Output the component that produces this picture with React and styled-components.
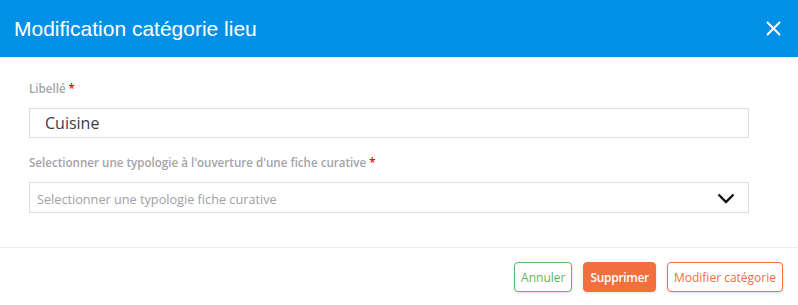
import React from "react";
import styled, { createGlobalStyle } from "styled-components";

const GlobalStyle = createGlobalStyle`
  html, body {
    margin: 0;
    padding: 0;
    background: #fff;
  }
  * {
    box-sizing: border-box;
  }
`;

const Modal = styled.div`
  width: 798px;
  height: 305px;
  background: #fff;
  display: flex;
  flex-direction: column;
  font-family: "Open Sans", sans-serif;
`;

const Header = styled.div`
  height: 57px;
  background: #0391e8;
  display: flex;
  align-items: center;
  justify-content: space-between;
  padding: 0 16px 0 14px;
`;

const Title = styled.h2`
  margin: 0;
  color: #fff;
  font-family: "Liberation Sans", Arial, sans-serif;
  font-weight: 400;
  font-size: 21px;
`;

const CloseButton = styled.button`
  border: none;
  background: none;
  padding: 0;
  width: 18px;
  height: 18px;
  display: flex;
  align-items: center;
  justify-content: center;
  cursor: pointer;
`;

const Body = styled.div`
  padding: 24px 49px 34px 29px;
  display: flex;
  flex-direction: column;
`;

const Field = styled.div`
  display: flex;
  flex-direction: column;
  margin-bottom: ${(p) => p.$gap || 0}px;
`;

const Label = styled.label`
  font-size: 11.6px;
  font-weight: 600;
  color: #a3a3a8;
  line-height: 16px;
  margin-bottom: 11px;
`;

const Required = styled.span`
  color: #f00;
`;

const Input = styled.div`
  height: 30px;
  border: 1px solid #dcdce4;
  display: flex;
  align-items: center;
  padding-left: 15px;
  font-size: 16px;
  color: #3c3c4c;
`;

const Select = styled.div`
  height: 31px;
  border: 1px solid #dcdce4;
  display: flex;
  align-items: center;
  justify-content: space-between;
  padding: 2px 13px 0 7px;
  font-size: 12.7px;
  color: #a0a0a6;
`;

const Footer = styled.div`
  border-top: 1px solid #ececec;
  display: flex;
  justify-content: flex-end;
  gap: 11px;
  padding: 14px 15px 0 0;
`;

const Button = styled.button`
  height: 30px;
  padding: 0 6px;
  border-radius: 4px;
  font-family: "Open Sans", sans-serif;
  font-size: 12px;
  font-weight: ${(p) => (p.$variant === "danger" ? 600 : 400)};
  letter-spacing: ${(p) => (p.$variant === "danger" ? "-0.3px" : "0")};
  cursor: pointer;
  border: 1px solid
    ${(p) => (p.$variant === "cancel" ? "#5cb85c" : "#f36f3b")};
  color: ${(p) =>
    p.$variant === "cancel"
      ? "#5cb85c"
      : p.$variant === "danger"
      ? "#fff"
      : "#f36f3b"};
  background: ${(p) => (p.$variant === "danger" ? "#f36f3b" : "#fff")};
  box-shadow: 0 1px 3px rgba(0, 0, 0, 0.12);
`;

export default function App() {
  return (
    <>
      <GlobalStyle />
      <Modal>
        <Header>
          <Title>Modification catégorie lieu</Title>
          <CloseButton aria-label="Fermer">
            <svg width="15" height="15" viewBox="0 0 15 15">
              <path
                d="M1 1 L14 14 M14 1 L1 14"
                stroke="#fff"
                strokeWidth="2"
                fill="none"
              />
            </svg>
          </CloseButton>
        </Header>
        <Body>
          <Field $gap={17}>
            <Label>
              Libellé <Required>*</Required>
            </Label>
            <Input>Cuisine</Input>
          </Field>
          <Field>
            <Label>
              Selectionner une typologie à l'ouverture d'une fiche curative{" "}
              <Required>*</Required>
            </Label>
            <Select>
              <span>Selectionner une typologie fiche curative</span>
              <svg width="18" height="11" viewBox="0 0 18 11">
                <path
                  d="M1.5 1.5 L9 9 L16.5 1.5"
                  stroke="#111"
                  strokeWidth="2.4"
                  fill="none"
                />
              </svg>
            </Select>
          </Field>
        </Body>
        <Footer>
          <Button $variant="cancel">Annuler</Button>
          <Button $variant="danger">Supprimer</Button>
          <Button $variant="primary">Modifier catégorie</Button>
        </Footer>
      </Modal>
    </>
  );
}
